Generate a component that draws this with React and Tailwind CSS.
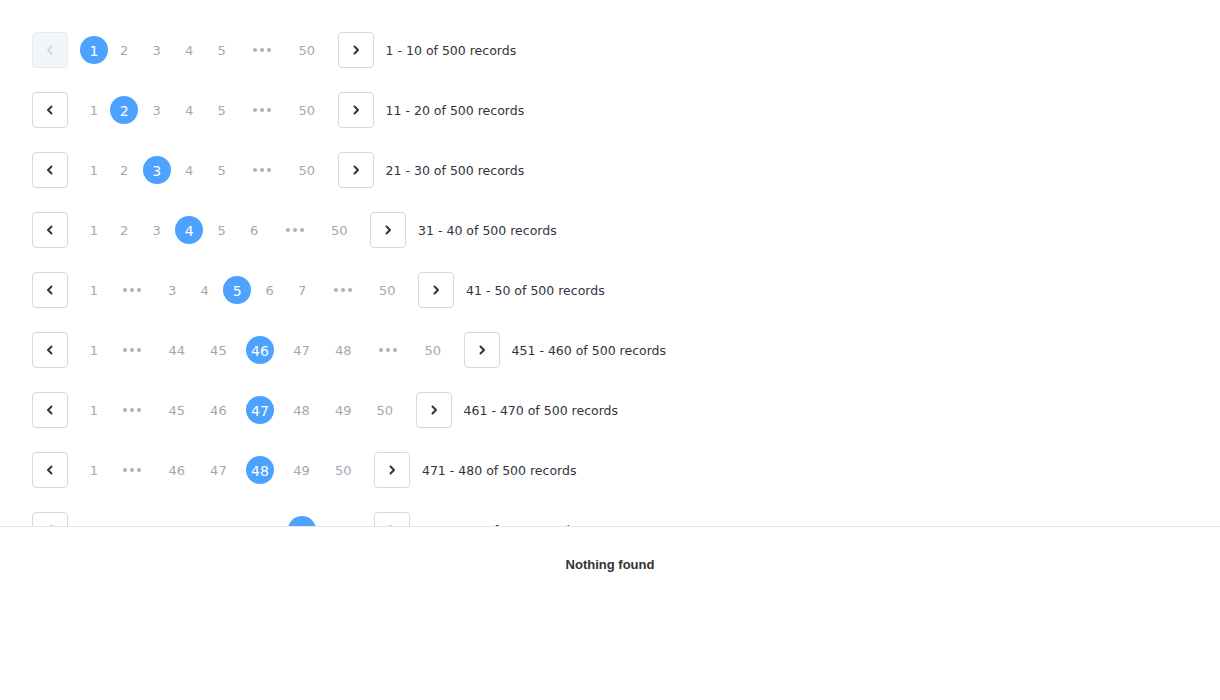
import React from "react";

const TOTAL = 500;

// widths fitted to the reference, fixed so the font does not move the items
function itemWidth(item) {
  if (item === "dots") return "w-[44px]";
  if (item === 1) return "w-[24px]";
  if (item < 10) return "w-[28.5px]";
  return "w-[37.6px]";
}

const rows = [
  { page: 1, items: [1, 2, 3, 4, 5, "dots", 50] },
  { page: 2, items: [1, 2, 3, 4, 5, "dots", 50] },
  { page: 3, items: [1, 2, 3, 4, 5, "dots", 50] },
  { page: 4, items: [1, 2, 3, 4, 5, 6, "dots", 50] },
  { page: 5, items: [1, "dots", 3, 4, 5, 6, 7, "dots", 50] },
  { page: 46, items: [1, "dots", 44, 45, 46, 47, 48, "dots", 50] },
  { page: 47, items: [1, "dots", 45, 46, 47, 48, 49, 50] },
  { page: 48, items: [1, "dots", 46, 47, 48, 49, 50] },
  { page: 49, items: [1, "dots", 46, 47, 48, 49, 50] },
];

function Chevron({ dir, disabled }) {
  return (
    <svg width="12" height="12" viewBox="0 0 12 12" fill="none">
      <path
        d={dir === "left" ? "M7.5 2.5 4 6l3.5 3.5" : "M4.5 2.5 8 6 4.5 9.5"}
        stroke={disabled ? "#d3d9e0" : "#2d3440"}
        strokeWidth="2"
        strokeLinecap="round"
        strokeLinejoin="round"
      />
    </svg>
  );
}

function NavButton({ dir, disabled }) {
  return (
    <button
      className={
        "w-9 h-9 shrink-0 flex items-center justify-center rounded-[4px] border " +
        (disabled
          ? "bg-[#f3f6f9] border-[#e6eaef]"
          : "bg-white border-[#d5d9de]")
      }
    >
      <Chevron dir={dir} disabled={disabled} />
    </button>
  );
}

function Dots() {
  return (
    <div className="flex items-center justify-center gap-[3px]">
      <span className="w-[4px] h-[4px] rounded-full bg-[#adb3bb]" />
      <span className="w-[4px] h-[4px] rounded-full bg-[#adb3bb]" />
      <span className="w-[4px] h-[4px] rounded-full bg-[#adb3bb]" />
    </div>
  );
}

function PageItem({ item, active }) {
  return (
    <div
      className={
        "relative h-9 flex items-center justify-center shrink-0 " +
        itemWidth(item)
      }
    >
      {item === "dots" ? (
        <Dots />
      ) : (
        <>
          {active && (
            <span className="absolute left-1/2 top-1/2 -translate-x-1/2 -translate-y-1/2 w-7 h-7 rounded-full bg-[#4ca2fe]" />
          )}
          <span
            className={
              "relative mt-[2px] " +
              (active ? "text-white text-[14px]" : "text-[13px] text-[#a2a8b1]")
            }
          >
            {item}
          </span>
        </>
      )}
    </div>
  );
}

function Pagination({ page, items }) {
  const start = (page - 1) * 10 + 1;
  const end = page * 10;
  return (
    <div className="flex items-center gap-3 h-9">
      <NavButton dir="left" disabled={page === 1} />
      <div className="flex items-center gap-1 ml-[2px]">
        {items.map((item, i) => (
          <PageItem key={i} item={item} active={item === page} />
        ))}
      </div>
      <NavButton dir="right" />
      <span className="mt-[2px] text-[12.5px] text-[#2f3540] whitespace-nowrap">
        {start} - {end} of {TOTAL} records
      </span>
    </div>
  );
}

export default function App() {
  return (
    <div
      className="w-[1220px] h-[700px] bg-white flex flex-col overflow-hidden"
      style={{ fontFamily: '"DejaVu Sans", sans-serif' }}
    >
      <div className="h-[526px] shrink-0 overflow-hidden">
        <div className="flex flex-col gap-6 pt-8 pl-8">
          {rows.map((r) => (
            <Pagination key={r.page} page={r.page} items={r.items} />
          ))}
        </div>
      </div>
      <div className="border-t border-[#e3e5e8] flex justify-center pt-[28px]">
        <span
          className="text-[13px] font-bold text-[#333333]"
          style={{ fontFamily: '"Liberation Sans", Arial, sans-serif' }}
        >
          Nothing found
        </span>
      </div>
    </div>
  );
}
